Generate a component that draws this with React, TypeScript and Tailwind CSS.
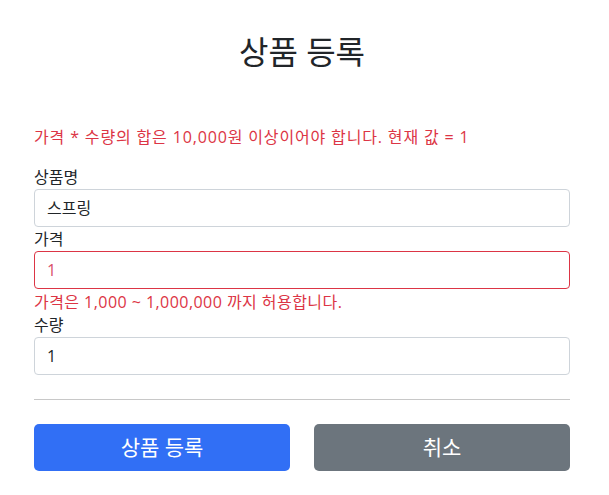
const font = "font-['Open_Sans','Noto_Sans_CJK_KR',sans-serif]";

function Field({
  label,
  value,
  invalid,
  error,
}: {
  label: string;
  value: string;
  invalid?: boolean;
  error?: string;
}) {
  return (
    <div>
      <label className="block h-6 text-[16px] leading-6 text-[#212529]">{label}</label>
      <div
        className={`flex h-[38px] items-center rounded-[4px] border px-3 text-[16px] ${
          invalid ? "border-[#dc3545] text-[#d9506a]" : "border-[#ced4da] text-[#212529]"
        }`}
      >
        {value}
      </div>
      {error && (
        <div className="mt-[2px] h-[22px] text-[16px] leading-[22px] tracking-[0.45px] text-[#dc3545]">
          {error}
        </div>
      )}
    </div>
  );
}

export default function App() {
  return (
    <div className={`min-h-[495px] bg-white ${font}`}>
      <div className="ml-[34px] w-[536px] pt-[34px]">
        <h2 className="text-center text-[32px] leading-9 text-[#212529]">상품 등록</h2>

        <p className="mt-[55px] text-[16px] leading-6 tracking-[0.85px] text-[#dc3545]">
          가격 * 수량의 합은 10,000원 이상이어야 합니다. 현재 값 = 1
        </p>

        <div className="mt-4">
          <Field label="상품명" value="스프링" />
          <Field
            label="가격"
            value="1"
            invalid
            error="가격은 1,000 ~ 1,000,000 까지 허용합니다."
          />
          <Field label="수량" value="1" />
        </div>

        <hr className="mt-6 border-t border-[#c8c8c8]" />

        <div className="mt-6 grid grid-cols-2 gap-6">
          <button className="h-[47px] rounded-[5px] bg-[#316ff5] text-[21px] text-white">
            상품 등록
          </button>
          <button className="h-[47px] rounded-[5px] bg-[#6c757d] text-[21px] text-white">
            취소
          </button>
        </div>
      </div>
    </div>
  );
}
